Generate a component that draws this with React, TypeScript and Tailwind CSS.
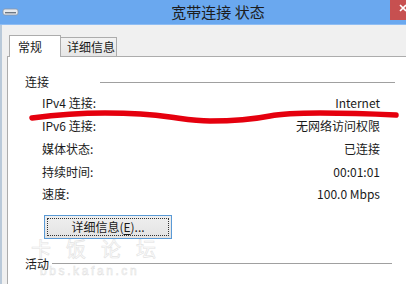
import React from "react";

const rows: [string, string][] = [
  ["IPv4 连接:", "Internet"],
  ["IPv6 连接:", "无网络访问权限"],
  ["媒体状态:", "已连接"],
  ["持续时间:", "00:01:01"],
  ["速度:", "100.0 Mbps"],
];

function TitleBar() {
  return (
    <div className="h-[25px] flex items-start bg-[#6aa8ef] border-b border-[#8fbdf3] overflow-hidden">
      <svg width="18" height="8" viewBox="0 0 18 8" className="ml-[2px] mt-[8px] shrink-0">
        <rect x="1" y="1" width="15" height="6" rx="2" fill="#e6eaef" stroke="#8a96a4" strokeWidth="0.8" />
        <rect x="3" y="4" width="11" height="1.4" fill="#6c7784" />
      </svg>
      <div className="flex-1 text-center pt-[3px] pl-[26px] text-[15px] leading-[18px] text-[#1c1c1c]">
        宽带连接 状态
      </div>
      <div className="w-[45px] h-[20px] mr-[-29px] bg-[#c75050] shrink-0">
        <svg width="45" height="20" viewBox="0 0 45 20">
          <path d="M10 5 L16 11 M16 5 L10 11" stroke="#fff" strokeWidth="1.6" />
        </svg>
      </div>
    </div>
  );
}

function Tabs() {
  return (
    <div className="h-[31px] flex items-end pl-[7px]">
      <div className="h-[22px] w-[52px] mb-[-1px] relative z-10 bg-white border border-b-0 border-[#acacac] pl-[8px] pt-[4px] text-[12px] leading-[14px]">
        常规
      </div>
      <div className="h-[19px] w-[57px] ml-[-1px] bg-gradient-to-b from-[#f2f2f2] to-[#e6e6e6] border border-b-0 border-[#acacac] pl-[6px] pt-[2px] text-[12px] leading-[14px]">
        详细信息
      </div>
    </div>
  );
}

function Panel() {
  return (
    <div className="flex-1 ml-[5px] bg-white border-t border-l border-[#acacac]">
      <div className="mt-[17px] h-[16px] flex items-center pl-[17px] pr-[11px]">
        <span className="text-[12px] leading-[16px]">连接</span>
        <div className="ml-auto w-[295px] h-px bg-[#a0a0a0]" />
      </div>
      <div className="mt-[2px] pl-[34px] pr-[26px]">
        {rows.map(([label, value]) => (
          <div key={label} className="h-[22.75px] flex items-center justify-between text-[12px] leading-[16px]">
            <span>{label}</span>
            <span>{value}</span>
          </div>
        ))}
      </div>
      <div className="mt-[9px] ml-[36px] w-[128px] h-[24px] border border-[#5a9ad6] bg-gradient-to-b from-[#efefef] to-[#e3e3e3] p-[2px]">
        <div className="h-full w-full border border-dotted border-[#333] flex items-center justify-center text-[12px] leading-[16px]">
          详细信息(<span className="underline underline-offset-2">E</span>)...
        </div>
      </div>
      <div className="mt-[17px] h-[16px] flex items-center pl-[17px] pr-[14px]">
        <span className="relative z-10 text-[12px] leading-[16px]">活动</span>
        <div className="ml-auto w-[340px] h-px bg-[#a0a0a0]" />
      </div>
    </div>
  );
}

export default function App() {
  return (
    <div className="relative w-[406px] h-[284px] overflow-hidden flex flex-col bg-[#f0f0f0] text-[#1a1a1a] font-['Noto_Sans_CJK_SC',sans-serif]">
      <TitleBar />
      <div className="flex-1 flex flex-col border-l-2 border-[#b9c9d9]">
        <Tabs />
        <Panel />
      </div>
      <div className="absolute left-[31px] top-[239px] pointer-events-none select-none opacity-70">
        <div className="text-[20px] leading-[20px] tracking-[15px] text-[#fdfdfd] [-webkit-text-stroke:0.6px_#d6d6d6]">
          卡饭论坛
        </div>
        <div className="mt-[6px] ml-[9px] text-[12px] leading-[12px] tracking-[2.6px] text-[#fdfdfd] [-webkit-text-stroke:0.5px_#d2d2d2] font-['Liberation_Sans',sans-serif]">
          bbs.kafan.cn
        </div>
      </div>
      <svg className="absolute inset-0 pointer-events-none" width="406" height="284" viewBox="0 0 406 284">
        <path
          d="M32 118 C 55 115, 80 113, 105 113 C 130 113, 150 114, 170 117 C 185 119, 195 121, 210 121 C 235 121, 255 119, 270 116 C 285 113, 300 113, 320 113 C 350 113, 375 114, 396 115"
          fill="none"
          stroke="#e5000e"
          strokeWidth="5.5"
          strokeLinecap="round"
        />
      </svg>
    </div>
  );
}
